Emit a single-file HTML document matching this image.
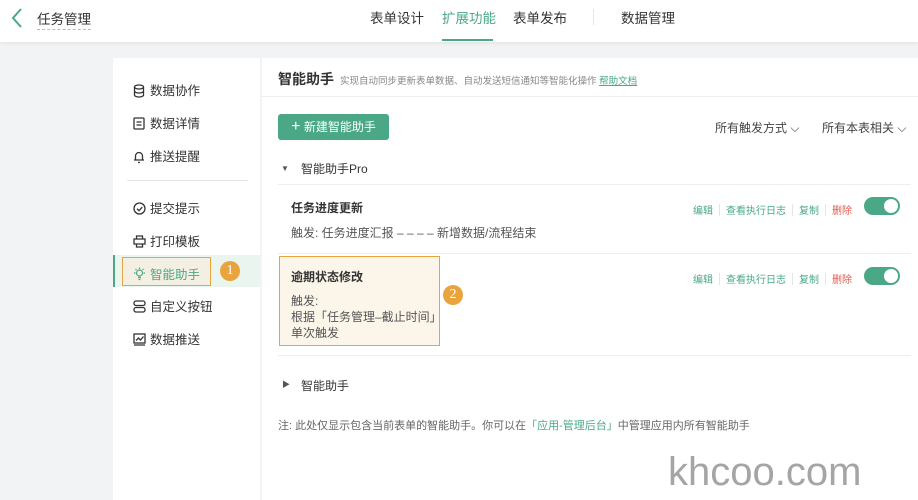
<!DOCTYPE html><html><head><meta charset="utf-8"><style>
*{margin:0;padding:0;box-sizing:border-box}
body{width:918px;height:500px;overflow:hidden;background:#f2f3f5;font-family:"Liberation Sans","Noto Sans CJK SC",sans-serif;color:#333;position:relative}
.a{position:absolute}
.hdr{left:0;top:0;width:918px;height:42px;background:#fff;box-shadow:0 1px 4px rgba(0,0,0,.08)}
.side{left:113px;top:58px;width:147px;height:442px;background:#fff}
.main{left:262px;top:58px;width:656px;height:442px;background:#fff}
.nav{font-size:12.5px;color:#333}
.ic{position:absolute;left:133px;margin-top:3px}
.lk{font-size:10px;color:#4aa887}
.sep{display:inline-block;width:1px;height:12px;background:#e5e5e5;vertical-align:middle;margin:0 6px}
.tg{width:36px;height:18px;border-radius:9px;background:#4aa887}
.tg i{position:absolute;right:2px;top:2px;width:14px;height:14px;border-radius:50%;background:#fff}
.badge{width:20px;height:20px;border-radius:50%;background:#e9a43e;color:#fff;font-size:14px;text-align:center;line-height:20px;font-family:"Liberation Serif",serif}
</style></head><body>
<div class="a hdr"></div>
<svg class="a" style="left:10px;top:7px" width="14" height="22"><path d="M11 2 L3 11 L11 20" stroke="#4aa887" stroke-width="2" fill="none"/></svg>
<div class="a" style="left:37px;top:8px;font-size:13.5px;border-bottom:1px dashed #bbb;padding-bottom:1px">任务管理</div>
<div class="a" style="left:370px;top:7px;font-size:13.5px">表单设计</div>
<div class="a" style="left:442px;top:7px;font-size:13.5px;color:#4aa887">扩展功能</div>
<div class="a" style="left:442px;top:39px;width:51px;height:2px;background:#4aa887"></div>
<div class="a" style="left:513px;top:7px;font-size:13.5px">表单发布</div>
<div class="a" style="left:593px;top:9px;width:1px;height:16px;background:#e5e5e5"></div>
<div class="a" style="left:621px;top:7px;font-size:13.5px">数据管理</div>

<div class="a side"></div>
<svg class="ic" style="top:81px" width="12" height="14" fill="none" stroke="#333" stroke-width="1.3"><ellipse cx="6" cy="3" rx="4.5" ry="2"/><path d="M1.5 3v8c0 1.1 2 2 4.5 2s4.5-.9 4.5-2V3M1.5 7c0 1.1 2 2 4.5 2s4.5-.9 4.5-2"/></svg>
<div class="a nav" style="left:150px;top:80px">数据协作</div>
<svg class="ic" style="top:114px" width="12" height="13" fill="none" stroke="#333" stroke-width="1.3"><rect x="1" y="1" width="10" height="11" rx="1"/><path d="M3.5 5h5M3.5 8h5"/></svg>
<div class="a nav" style="left:150px;top:113px">数据详情</div>
<svg class="ic" style="top:147px" width="12" height="14" fill="none" stroke="#333" stroke-width="1.3"><path d="M2.5 10V6a3.5 3.5 0 017 0v4h1.5H1z M5 12.5h2"/></svg>
<div class="a nav" style="left:150px;top:146px">推送提醒</div>
<div class="a" style="left:127px;top:180px;width:121px;height:1px;background:#e5e5e5"></div>
<svg class="ic" style="top:199px" width="13" height="13" fill="none" stroke="#333" stroke-width="1.3"><circle cx="6.5" cy="6.5" r="5.5"/><path d="M4 6.7l2 2 3.3-3.6"/></svg>
<div class="a nav" style="left:150px;top:198px">提交提示</div>
<svg class="ic" style="top:232px" width="13" height="13" fill="none" stroke="#333" stroke-width="1.3"><path d="M3.5 4V1h6v3M1 4h11v5H1z M3.5 9v3h6V9"/></svg>
<div class="a nav" style="left:150px;top:231px">打印模板</div>
<div class="a" style="left:113px;top:255px;width:147px;height:32px;background:#eaf5f0;border-left:2px solid #4aa887"></div>
<div class="a" style="left:122px;top:257px;width:89px;height:29px;border:1.5px solid #e9a43e;background:#f4efe3"></div>
<svg class="ic" style="top:264px" width="13" height="14" fill="none" stroke="#4aa887" stroke-width="1.2"><circle cx="6.5" cy="6" r="3"/><path d="M5 10.5h3M5.5 12.5h2M6.5 0.5v1.5M1 6h1.5M10.5 6H12M2.5 2l1 1M10.5 2l-1 1"/></svg>
<div class="a nav" style="left:150px;top:264px;color:#4aa887">智能助手</div>
<div class="a badge" style="left:220px;top:261px">1</div>
<svg class="ic" style="top:297px" width="13" height="13" fill="none" stroke="#333" stroke-width="1.3"><rect x="1" y="1" width="11" height="4.5" rx="2"/><rect x="1" y="7.5" width="11" height="4.5" rx="2"/></svg>
<div class="a nav" style="left:150px;top:296px">自定义按钮</div>
<svg class="ic" style="top:330px" width="13" height="13" fill="none" stroke="#333" stroke-width="1.3"><rect x="1" y="1" width="11" height="9"/><path d="M3 7.5l2.5-2.5 2 2 3-3.5M1 12h11"/></svg>
<div class="a nav" style="left:150px;top:329px">数据推送</div>

<div class="a main"></div>
<div class="a" style="left:262px;top:96px;width:656px;height:1px;background:#eee"></div>
<div class="a" style="left:278px;top:69px;font-size:14px;font-weight:bold">智能助手</div>
<div class="a" style="left:340px;top:73px;font-size:9.5px;color:#888">实现自动同步更新表单数据、自动发送短信通知等智能化操作 <u style="color:#4aa887">帮助文档</u></div>
<div class="a" style="left:278px;top:114px;width:111px;height:26px;background:#4aa887;border-radius:3px;color:#fff;font-size:12px;line-height:26px;text-align:center"><b style="font-size:16px;font-weight:normal">+</b> 新建智能助手</div>
<div class="a" style="left:715px;top:119px;font-size:12px;color:#444">所有触发方式 ⌵</div>
<div class="a" style="left:822px;top:119px;font-size:12px;color:#444">所有本表相关 ⌵</div>
<div class="a" style="left:281px;top:164px;font-size:8px;color:#555">▼</div>
<div class="a" style="left:301px;top:160px;font-size:12px">智能助手Pro</div>
<div class="a" style="left:278px;top:184px;width:633px;height:1px;background:#eee"></div>
<div class="a" style="left:291px;top:199px;font-size:12px;font-weight:bold">任务进度更新</div>
<div class="a" style="left:291px;top:224px;font-size:12px;color:#555">触发: 任务进度汇报 – – – – 新增数据/流程结束</div>
<div class="a" style="left:693px;top:201px"><span class="lk">编辑</span><span class="sep"></span><span class="lk">查看执行日志</span><span class="sep"></span><span class="lk">复制</span><span class="sep"></span><span class="lk" style="color:#e05a4e">删除</span></div>
<div class="a tg" style="left:864px;top:197px"><i></i></div>
<div class="a" style="left:278px;top:253px;width:633px;height:1px;background:#eee"></div>
<div class="a" style="left:279px;top:256px;width:161px;height:90px;border:1.5px solid #e9a43e;background:#fbf5ea"></div>
<div class="a" style="left:291px;top:268px;font-size:12px;font-weight:bold">逾期状态修改</div>
<div class="a" style="left:291px;top:293px;font-size:12px;color:#555;line-height:16px">触发:<br>根据「任务管理–截止时间」<br>单次触发</div>
<div class="a badge" style="left:443px;top:285px">2</div>
<div class="a" style="left:693px;top:270px"><span class="lk">编辑</span><span class="sep"></span><span class="lk">查看执行日志</span><span class="sep"></span><span class="lk">复制</span><span class="sep"></span><span class="lk" style="color:#e05a4e">删除</span></div>
<div class="a tg" style="left:864px;top:267px"><i></i></div>
<div class="a" style="left:278px;top:355px;width:633px;height:1px;background:#eee"></div>
<div class="a" style="left:282px;top:379px;font-size:8px;color:#555">▶</div>
<div class="a" style="left:301px;top:377px;font-size:12px">智能助手</div>
<div class="a" style="left:278px;top:417px;font-size:11px;color:#666">注: 此处仅显示包含当前表单的智能助手。你可以在<span style="color:#4aa887">「应用-管理后台」</span>中管理应用内所有智能助手</div>
<div class="a" style="left:668px;top:450px;font-size:40px;color:#a5a5a5;font-family:'Liberation Sans',sans-serif">khcoo.com</div>
</body></html>
